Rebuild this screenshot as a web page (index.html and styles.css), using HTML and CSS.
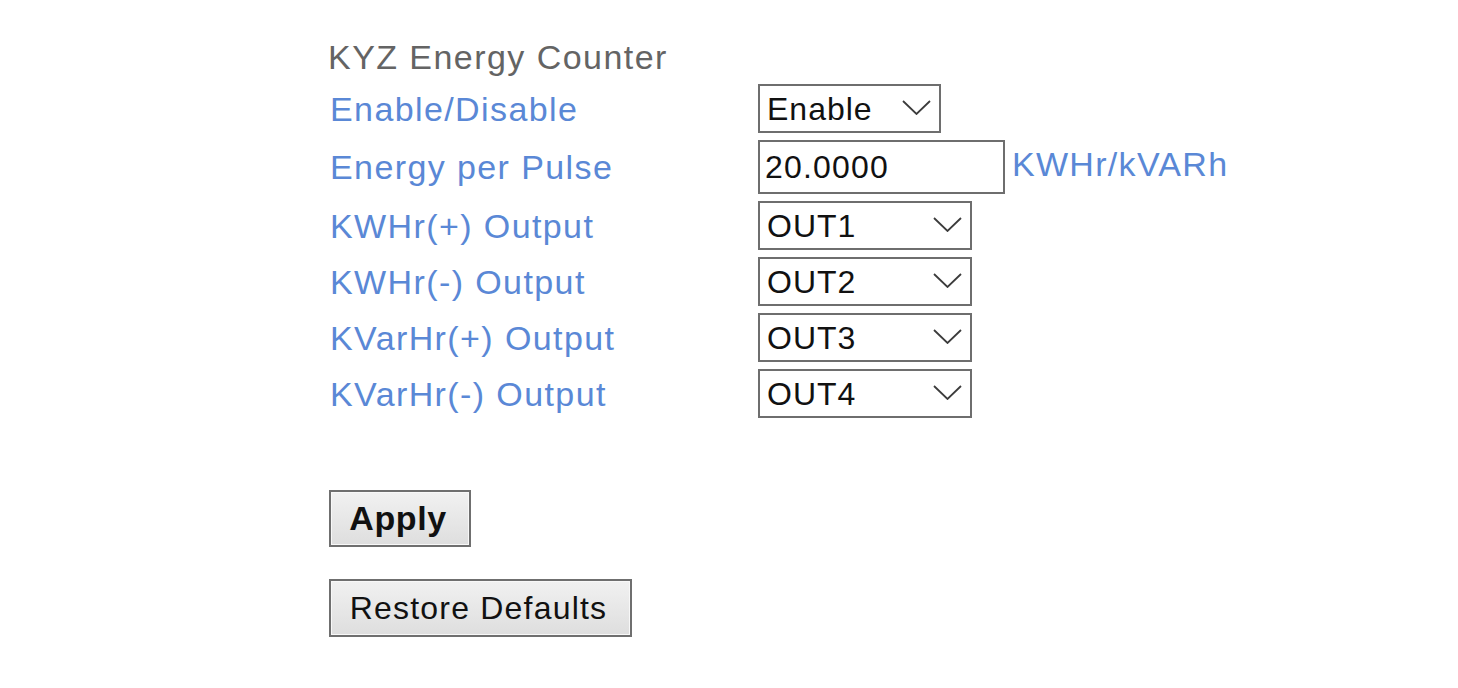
FILE: index.html
```html
<!DOCTYPE html>
<html lang="en">
<head>
<meta charset="utf-8">
<title>KYZ Energy Counter</title>
<link rel="stylesheet" href="styles.css">
</head>
<body>
<main class="page">
  <div class="title">KYZ Energy Counter</div>
  <div class="form-grid">
    <div class="label">Enable/Disable</div>
    <div class="control">
      <div class="select-wrap w-enable">
        <select class="sel"><option>Enable</option><option>Disable</option></select>
        <svg class="chev" viewBox="0 0 29 15" aria-hidden="true"><path d="M1 1 L14.5 14 L28 1"/></svg>
      </div>
    </div>

    <div class="label">Energy per Pulse</div>
    <div class="control">
      <input class="txt" type="text" value="20.0000">
      <span class="unit">KWHr/kVARh</span>
    </div>

    <div class="label">KWHr(+) Output</div>
    <div class="control">
      <div class="select-wrap w-out">
        <select class="sel"><option>OUT1</option></select>
        <svg class="chev" viewBox="0 0 29 15" aria-hidden="true"><path d="M1 1 L14.5 14 L28 1"/></svg>
      </div>
    </div>

    <div class="label">KWHr(-) Output</div>
    <div class="control">
      <div class="select-wrap w-out">
        <select class="sel"><option>OUT2</option></select>
        <svg class="chev" viewBox="0 0 29 15" aria-hidden="true"><path d="M1 1 L14.5 14 L28 1"/></svg>
      </div>
    </div>

    <div class="label">KVarHr(+) Output</div>
    <div class="control">
      <div class="select-wrap w-out">
        <select class="sel"><option>OUT3</option></select>
        <svg class="chev" viewBox="0 0 29 15" aria-hidden="true"><path d="M1 1 L14.5 14 L28 1"/></svg>
      </div>
    </div>

    <div class="label">KVarHr(-) Output</div>
    <div class="control">
      <div class="select-wrap w-out">
        <select class="sel"><option>OUT4</option></select>
        <svg class="chev" viewBox="0 0 29 15" aria-hidden="true"><path d="M1 1 L14.5 14 L28 1"/></svg>
      </div>
    </div>
  </div>

  <div class="actions">
    <button class="btn btn-apply" type="button">Apply</button>
    <button class="btn btn-restore" type="button">Restore Defaults</button>
  </div>
</main>
</body>
</html>
```
FILE: styles.css
```css
html, body {
  margin: 0;
  padding: 0;
  background: #ffffff;
}

body {
  font-family: "Liberation Sans", Arial, sans-serif;
}

.page {
  padding: 37px 0 0 328px;
}

.title {
  font-size: 34px;
  line-height: 40px;
  letter-spacing: 1.45px;
  color: #646464;
}

.form-grid {
  margin-top: 7px;
  display: grid;
  grid-template-columns: 430px auto;
  row-gap: 7px;
  align-items: center;
}

.label {
  padding-left: 2px;
  font-size: 34px;
  line-height: 40px;
  letter-spacing: 1.4px;
  color: #5a88d6;
  white-space: nowrap;
}

.control {
  display: flex;
  align-items: center;
  gap: 7px;
}

.select-wrap {
  position: relative;
  height: 49px;
}

.w-enable { width: 183px; }
.w-out { width: 214px; }

.sel {
  appearance: none;
  -webkit-appearance: none;
  box-sizing: border-box;
  width: 100%;
  height: 100%;
  margin: 0;
  padding: 0 0 0 7px;
  border: 2px solid #6e6e6e;
  border-radius: 0;
  background: #ffffff;
  color: #111111;
  font-family: "Liberation Sans", Arial, sans-serif;
  font-size: 32px;
  letter-spacing: 1px;
  outline: none;
}

.chev {
  position: absolute;
  right: 10px;
  top: 16px;
  width: 29px;
  height: 15px;
  fill: none;
  stroke: #3c3c3c;
  stroke-width: 1.8;
  pointer-events: none;
}

.txt {
  box-sizing: border-box;
  width: 247px;
  height: 54px;
  margin: 0;
  padding: 0 0 0 5px;
  border: 2px solid #6e6e6e;
  border-radius: 0;
  background: #ffffff;
  color: #111111;
  font-family: "Liberation Sans", Arial, sans-serif;
  font-size: 32px;
  letter-spacing: 1.2px;
  outline: none;
}

.unit {
  font-size: 34px;
  line-height: 40px;
  letter-spacing: 1.3px;
  color: #5a88d6;
  position: relative;
  top: -3px;
}

.actions {
  margin-top: 72px;
  display: flex;
  flex-direction: column;
  align-items: flex-start;
  gap: 32px;
  padding-left: 1px;
}

.btn {
  box-sizing: border-box;
  margin: 0;
  height: 57px;
  border: 2px solid #6f6f6f;
  border-radius: 0;
  background: linear-gradient(#f1f1f1, #dedede);
  box-shadow: inset 0 0 0 1px #f8f8f8;
  color: #111111;
  font-family: "Liberation Sans", Arial, sans-serif;
  cursor: pointer;
}

.btn-apply {
  width: 142px;
  padding: 0 4px 0 0;
  font-size: 34px;
  font-weight: bold;
  letter-spacing: 0.6px;
}

.btn-restore {
  width: 303px;
  height: 58px;
  padding: 0 4px 0 0;
  font-size: 32px;
  letter-spacing: 1.2px;
}
```
